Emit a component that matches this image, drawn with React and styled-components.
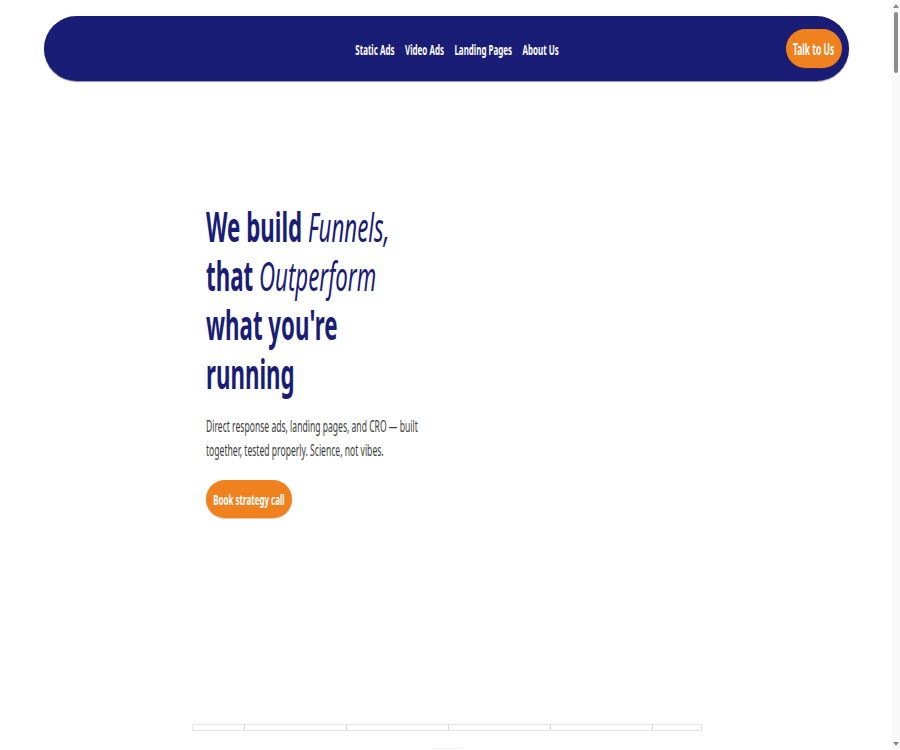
import React from "react";
import styled, { createGlobalStyle } from "styled-components";

const K = 0.55;

const Global = createGlobalStyle`
  html, body { margin: 0; padding: 0; background: #ffffff; }
  body {
    font-family: "Noto Sans", "Open Sans", sans-serif;
    -webkit-font-smoothing: antialiased;
  }
  * { box-sizing: border-box; }
`;

const Page = styled.div`
  display: flex;
  flex-direction: column;
  min-height: 9000px;
  padding-top: 16px;
  padding-right: 7px;
`;

const NavBar = styled.header`
  margin: 0 44px;
  height: 65px;
  border-radius: 33px;
  background: #1a1d75;
  box-shadow: 0 1px 1px rgba(10, 12, 60, 0.45);
  display: flex;
  align-items: center;
  padding: 0 7px;
`;

const LogoSlot = styled.div`
  width: 78px;
  height: 30px;
  flex: none;
`;

const NavArea = styled.div`
  flex: 1;
  display: flex;
  justify-content: center;
  min-width: 0;
`;

const NavLinks = styled.nav`
  display: flex;
  align-items: center;
  gap: 19px;
  transform: scaleX(${K});
  transform-origin: center center;
  flex: none;
`;

const NavLink = styled.a`
  color: #ffffff;
  font-weight: 700;
  font-size: 14.5px;
  text-decoration: none;
  white-space: nowrap;
`;

const PillButton = styled.a`
  flex: none;
  display: inline-flex;
  align-items: center;
  justify-content: center;
  width: ${(p) => p.$w}px;
  height: ${(p) => p.$h}px;
  border-radius: 999px;
  background: #ef821f;
  text-decoration: none;
  box-shadow: 0 1px 1px rgba(120, 60, 0, 0.3);
`;

const ButtonLabel = styled.span`
  flex: none;
  color: #ffffff;
  font-weight: 700;
  font-size: ${(p) => p.$size}px;
  white-space: nowrap;
  transform: scaleX(${K});
  transform-origin: center center;
`;

const Hero = styled.section`
  height: 643px;
  display: flex;
  flex-direction: column;
  padding-left: 206px;
  padding-top: 121px;
`;

const Copy = styled.div`
  width: 420px;
  transform: scaleX(${K});
  transform-origin: left top;
`;

const Heading = styled.h1`
  margin: 0;
  width: 380px;
  color: #1a1d75;
  font-size: 40.5px;
  line-height: 49px;
  font-weight: 700;

  em {
    font-style: italic;
    font-weight: 400;
  }
`;

const Lead = styled.p`
  margin: 16px 0 0;
  width: 405px;
  color: #3b3b3b;
  font-size: 15.6px;
  line-height: 24px;
  font-weight: 400;
`;

const CtaRow = styled.div`
  margin-top: 18px;
  display: flex;
`;

const Strip = styled.div`
  margin: 0 auto;
  width: 510px;
  height: 7px;
  display: grid;
  grid-template-columns: 51px repeat(4, 102px) 51px;
  border: 1px solid #e4e4e4;
`;

const StripCell = styled.div`
  border-left: ${(p) => (p.$first ? "none" : "1px solid #d8d8d8")};
`;

const Tab = styled.div`
  margin: 17px auto 0;
  width: 30px;
  height: 2px;
  border-top: 1px solid #f0f0f0;
`;

const ScrollBar = styled.div`
  position: fixed;
  top: 0;
  right: 0;
  bottom: 0;
  width: 8px;
  background: #f9f9f9;
  display: flex;
  flex-direction: column;
  align-items: center;
  padding: 4px 0;
`;

const Arrow = styled.div`
  width: 0;
  height: 0;
  border-left: 3px solid transparent;
  border-right: 3px solid transparent;
  ${(p) =>
    p.$down
      ? "border-top: 4px solid #8a8a8a;"
      : "border-bottom: 4px solid #8a8a8a;"}
`;

const Track = styled.div`
  flex: 1;
  width: 100%;
  display: flex;
  justify-content: center;
  padding-top: 4px;
`;

const Thumb = styled.div`
  width: 4px;
  height: 61px;
  border-radius: 2px;
  background: #8c8c8c;
`;

export default function App() {
  return (
    <>
      <Global />
      <Page>
        <NavBar>
          <LogoSlot />
          <NavArea>
            <NavLinks>
              <NavLink href="#">Static Ads</NavLink>
              <NavLink href="#">Video Ads</NavLink>
              <NavLink href="#">Landing Pages</NavLink>
              <NavLink href="#">About Us</NavLink>
            </NavLinks>
          </NavArea>
          <PillButton href="#" $w={56} $h={39}>
            <ButtonLabel $size={15.5}>Talk to Us</ButtonLabel>
          </PillButton>
        </NavBar>
        <Hero>
          <Copy>
            <Heading>
              We build <em>Funnels,</em> that <em>Outperform</em> what you're running
            </Heading>
            <Lead>
              Direct response ads, landing pages, and CRO — built together, tested properly. Science, not vibes.
            </Lead>
          </Copy>
          <CtaRow>
            <PillButton href="#" $w={86} $h={38}>
              <ButtonLabel $size={14.5}>Book strategy call</ButtonLabel>
            </PillButton>
          </CtaRow>
        </Hero>
        <Strip>
          {[0, 1, 2, 3, 4, 5].map((i) => (
            <StripCell key={i} $first={i === 0} />
          ))}
        </Strip>
        <Tab />
      </Page>
      <ScrollBar>
        <Arrow />
        <Track>
          <Thumb />
        </Track>
        <Arrow $down />
      </ScrollBar>
    </>
  );
}
